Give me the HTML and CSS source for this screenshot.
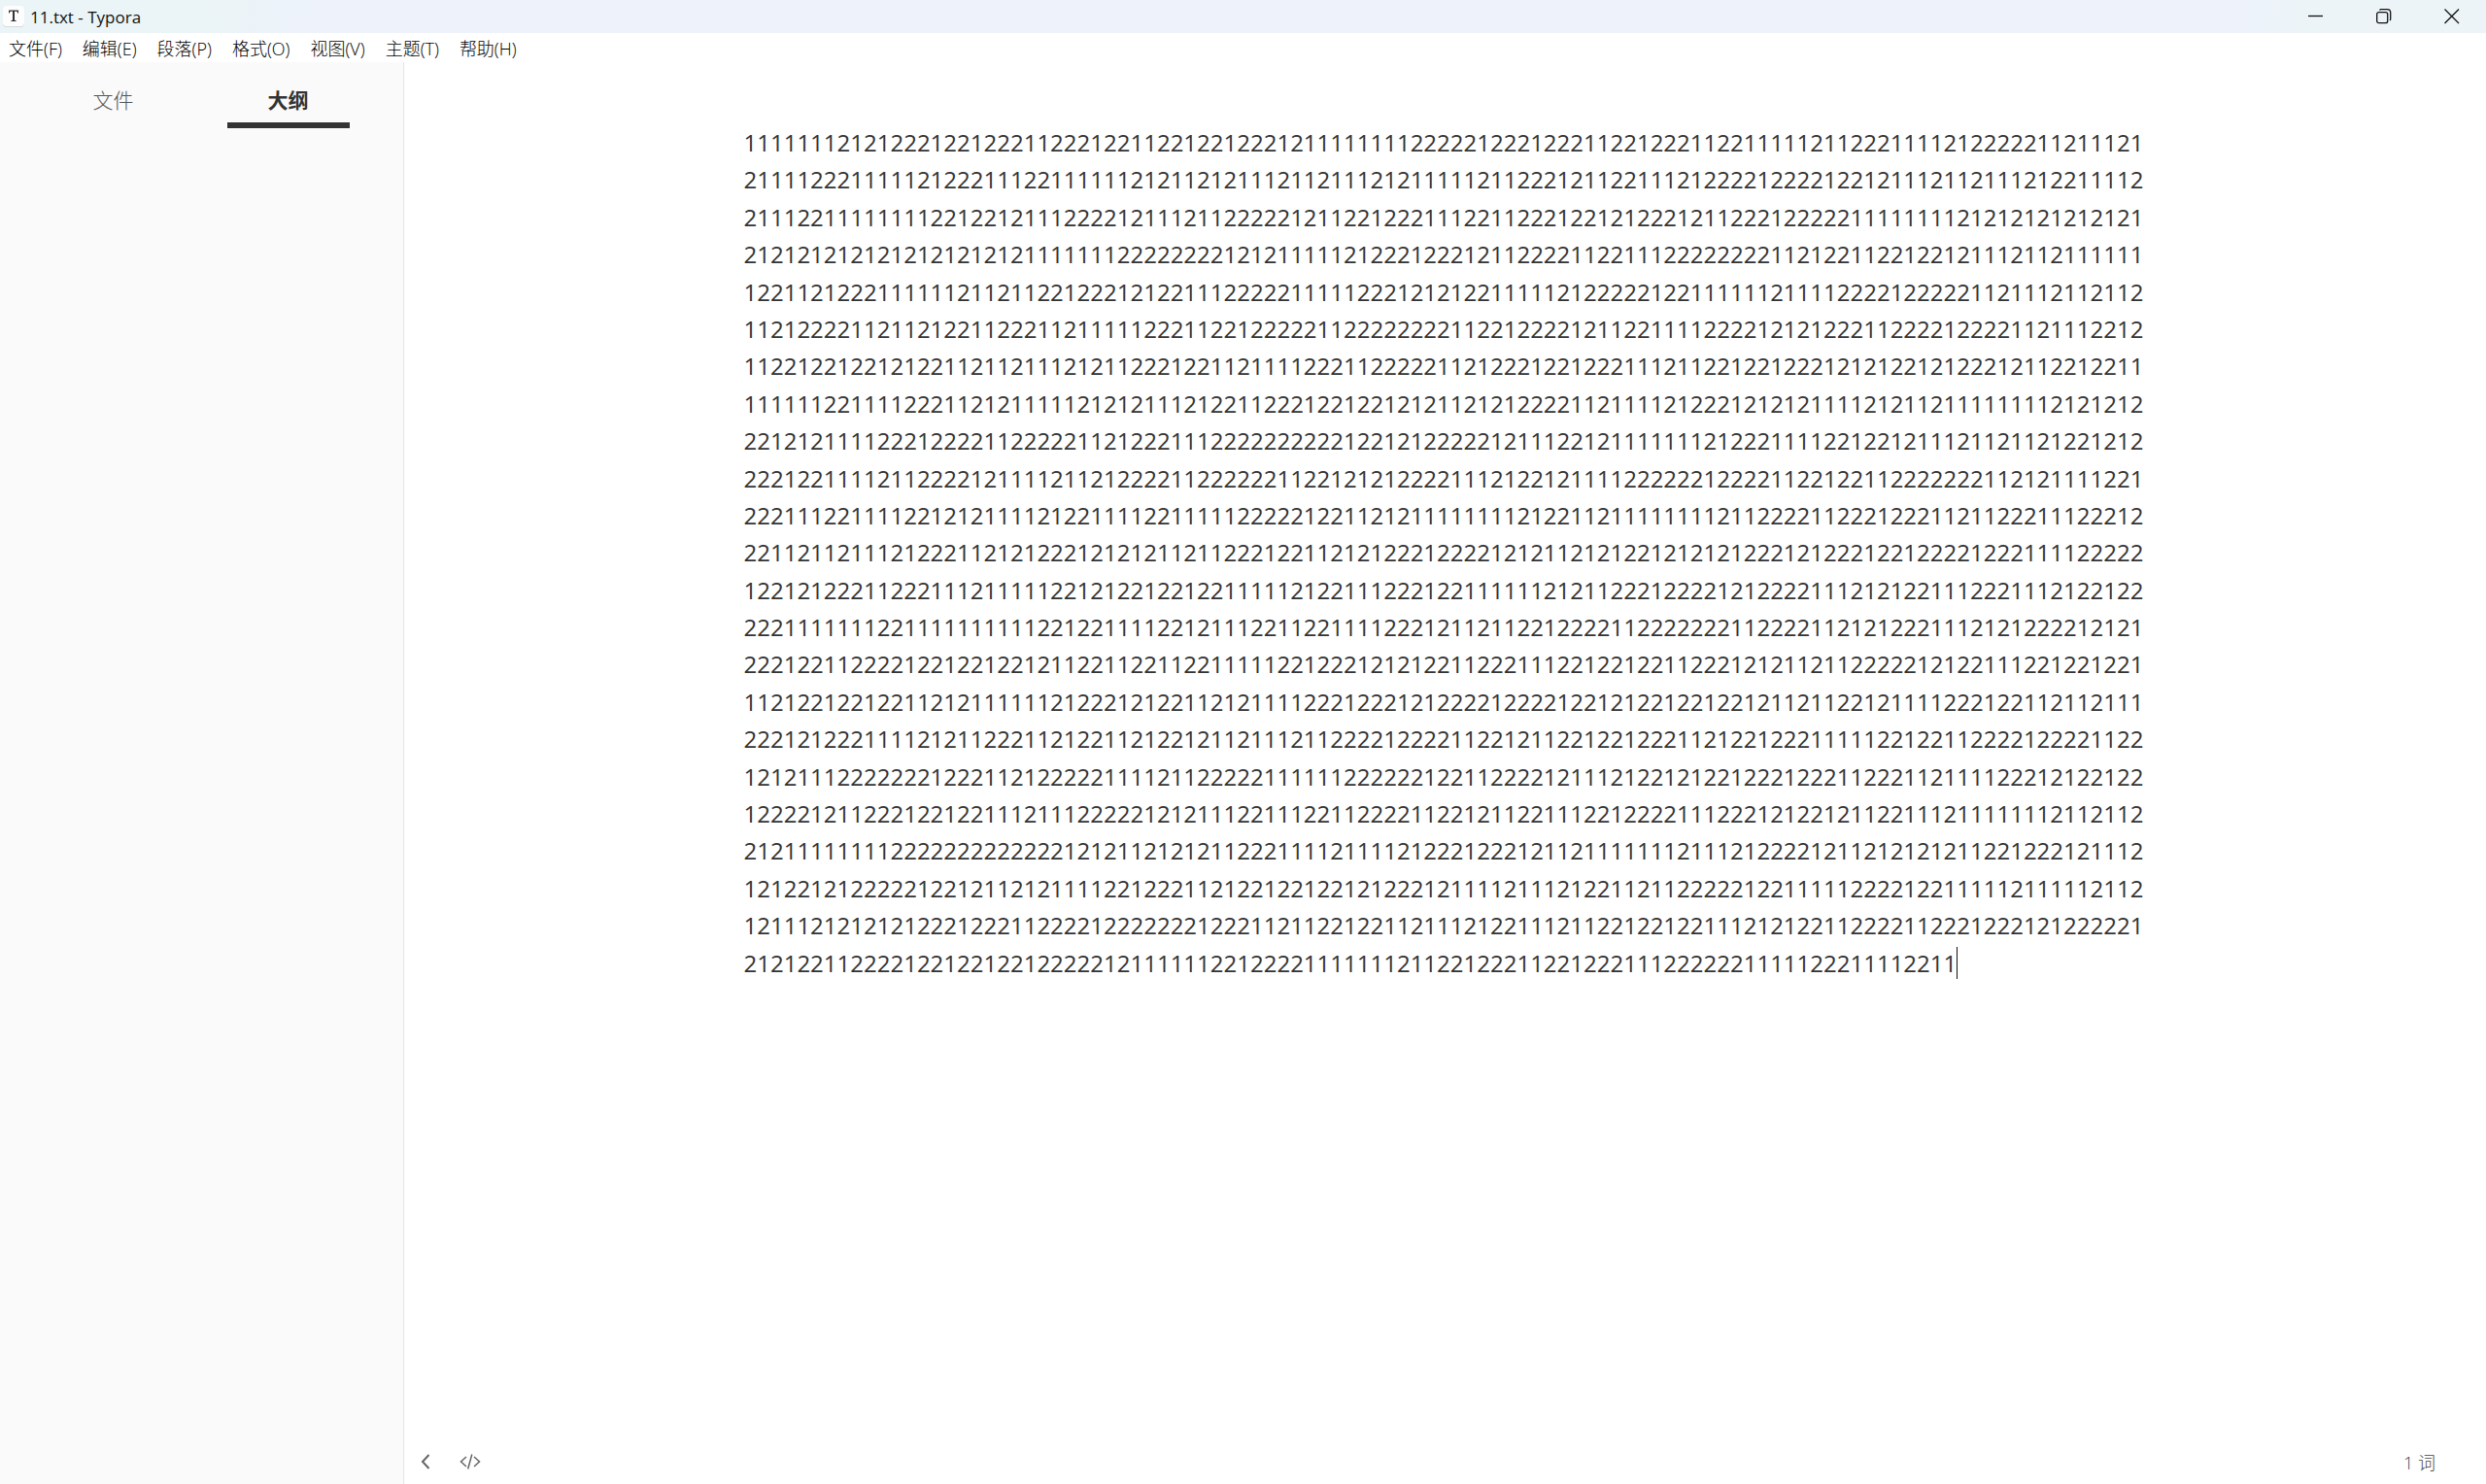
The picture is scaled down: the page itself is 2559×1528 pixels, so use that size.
FILE: index.html
```html
<!DOCTYPE html>
<html lang="zh-CN">
<head>
  <meta charset="UTF-8" />
  <meta name="viewport" content="width=device-width, initial-scale=1.0" />
  <title>11.txt - Typora</title>
  <link rel="stylesheet" href="styles.css">
</head>
<body>
  <header class="titlebar">
    <svg class="app-icon" viewBox="0 0 22 22" aria-hidden="true">
      <rect x="0" y="1" width="22" height="21" rx="4" fill="#d6dadb" />
      <rect x="0" y="0" width="22" height="21" rx="4" fill="#fdfdfd" />
      <path d="M6 4.500H16V7.500H15.200L14.500 5.700H12V14.800L13.700 15.200V16H8.300V15.200L10 14.800V5.700H7.500L6.800 7.500H6Z" fill="#333" />
    </svg>
    <span class="title">11.txt - Typora</span>
    <div class="window-buttons">
      <button type="button" aria-label="最小化">
        <svg viewBox="0 0 16 16"><path d="M0 7.500H15" /></svg>
      </button>
      <button type="button" aria-label="还原">
        <svg viewBox="0 0 16 16">
          <rect x="0.700" y="3.700" width="11" height="11" rx="2" />
          <path d="M3.500 1.500Q4 0.700 5 0.700H11.500Q14.700 0.700 14.700 4V10.500Q14.700 11.500 14 12" />
        </svg>
      </button>
      <button type="button" aria-label="关闭">
        <svg viewBox="0 0 16 16"><path d="M0.500 0.500L15 15M15 0.500L0.500 15" /></svg>
      </button>
    </div>
  </header>

  <nav class="menubar">
    <button type="button">文件(F)</button>
    <button type="button">编辑(E)</button>
    <button type="button">段落(P)</button>
    <button type="button">格式(O)</button>
    <button type="button">视图(V)</button>
    <button type="button">主题(T)</button>
    <button type="button">帮助(H)</button>
  </nav>

  <div class="workspace">
    <aside class="sidebar">
      <div class="tabs">
        <button type="button" class="tab">文件</button>
        <button type="button" class="tab active">大纲</button>
      </div>
    </aside>

    <main class="content">
      <article class="write">
        <p>111111121212221221222112221221122122122212111111112222212221222112212221122111112112221111212222211211121
211112221111121222111221111112121121211121121112121111121122212112211121222212222122121112112111212211112
211122111111112212212111222212111211222221211221222111221122212212122212112221222221111111121212121212121
212121212121212121212111111122222222121211111212221222121122221122111222222221121221122122121112112111111
122112122211111121121122122212122111222221111122212121221111121222221221111112111122221222221121112112112
112122221121121221122211211111222112212222211222222221122122221211221111222212121222112222122221121112212
112212212212122112112111212112221221121111222112222211212221221222111211221221222121212212122212112212211
111111221111222112121111121212111212211222122122121211212122221121111212221212121111212112111111112121212
221212111122212222112222211212221112222222222122121222221211122121111111212221111221221211121121121221212
222122111121122221211112112122221122222211221212122221112122121111222222122221122122112222222112121111221
222111221111221212111121221111221111122222122112121111111121221121111111121122221122212221121122211122212
221121121112122211212122212121211211222122112121222122221212112121221212121222121222122122221222111122222
122121222112221112111112212122122122111112122111222122111111212112221222212122221112121221112221112122122
222111111122111111111122122111122121112211221111222121121122122221122222221122221121212221112121222212121
222122112222122122122121122112211221111122122212121221122211122122122112221212112112222212122111221221221
112122122122112121111112122212122112121111222122212122221222212212122122122121121122121111222122112112111
222121222111121211222112122112122121121112112222122221122121122122122211212212221111122122112222122221122
121211122222221222112122222111121122222111111222222122112222121112122121221222122211222112111122212122122
122221211222122122111211122222121211122111221122221122121122111221222211122212122121122111211111112112112
212111111112222222222222121211212121122211112111121222122212112111111121112122221211212121211221222121112
121221212222212212112121111221222112122122122121222121111211121221121122222122111112222122111112111112112
121112121212122212221122221222222212221121122122112111212211121122122122111212122112222112221222121222221
2121221122221221221221222221211111122122221111111211221222112212221112222221111122211112211<span class="caret"></span></p>
      </article>

      <footer class="statusbar">
        <button type="button" aria-label="隐藏侧边栏">
          <svg class="back" viewBox="0 0 10 16"><path d="M8.500 1L2 8L8.500 15" /></svg>
        </button>
        <button type="button" aria-label="源代码模式">
          <svg class="source" viewBox="0 0 22 16"><path d="M7 3L1.500 8L7 13M15 3L20.500 8L15 13M12.800 0.500L8.700 15.500" /></svg>
        </button>
        <button type="button" class="word-count">1 词</button>
      </footer>
    </main>
  </div>
</body>
</html>
```
FILE: styles.css
```css
* {
  box-sizing: border-box;
}
body {
  margin: 0;
  height: 100vh;
  display: flex;
  flex-direction: column;
  font-family: "Open Sans", "Noto Sans CJK SC", sans-serif;
  color: #333;
  background: #fff;
  overflow: hidden;
}
button {
  padding: 0;
  border: none;
  background: none;
  font: inherit;
  color: inherit;
}
svg {
  display: block;
}

.titlebar {
  flex: none;
  height: 34px;
  display: flex;
  align-items: center;
  padding-left: 3px;
  gap: 6px;
  color: #111;
  background: linear-gradient(90deg, #ebf4f6 8%, #edf2fb 13%, #edf2fb 90%, #ecf4f7 93%);
}
.app-icon {
  width: 22px;
  height: 22px;
}
.title {
  font-size: 17px;
}
.window-buttons {
  margin-left: auto;
  display: flex;
  height: 100%;
}
.window-buttons button {
  width: 70px;
  display: flex;
  align-items: center;
  justify-content: center;
}
.window-buttons button:last-child {
  padding-right: 27px;
  justify-content: flex-end;
}
.window-buttons svg {
  width: 16px;
  height: 16px;
  fill: none;
  stroke: #111;
  stroke-width: 1.300;
}

.menubar {
  flex: none;
  height: 30px;
  display: flex;
  align-items: center;
  gap: 21px;
  padding-left: 9px;
  font-size: 18px;
  font-weight: 300;
  color: #000;
}

.workspace {
  flex: 1;
  display: flex;
  min-height: 0;
}
.sidebar {
  flex: none;
  width: 416px;
  background: #fafafa;
  border-right: 1px solid #e6e6e6;
}
.tabs {
  display: flex;
  justify-content: center;
  gap: 54px;
  padding: 20px 2px 0 0;
}
.tab {
  width: 126px;
  height: 48px;
  padding-bottom: 4px;
  border-bottom: 6px solid transparent;
  font-size: 21px;
  font-weight: 300;
  line-height: 38px;
  color: #555;
}
.tab.active {
  font-weight: bold;
  color: #333;
  border-bottom-color: #333;
}

.content {
  flex: 1;
  display: flex;
  flex-direction: column;
}
.write {
  flex: 1;
  width: 100%;
  max-width: 1504px;
  margin: 0 auto;
  padding: 64px 30px 0;
}
.write p {
  margin: 0;
  font-size: 24px;
  line-height: 1.6;
  white-space: pre-line;
  overflow-wrap: anywhere;
}
.caret {
  display: inline-block;
  width: 1px;
  height: 33px;
  vertical-align: -7px;
  background: #111;
}

.statusbar {
  height: 46px;
  display: flex;
  align-items: center;
  gap: 30px;
  padding: 0 52px 0 17px;
  font-size: 18px;
  font-weight: 300;
  color: #444;
}
.statusbar svg {
  height: 16px;
  fill: none;
  stroke: #666;
}
.back {
  width: 10px;
  stroke-width: 2;
}
.source {
  width: 22px;
  stroke-width: 1.500;
}
.word-count {
  margin-left: auto;
}
```
